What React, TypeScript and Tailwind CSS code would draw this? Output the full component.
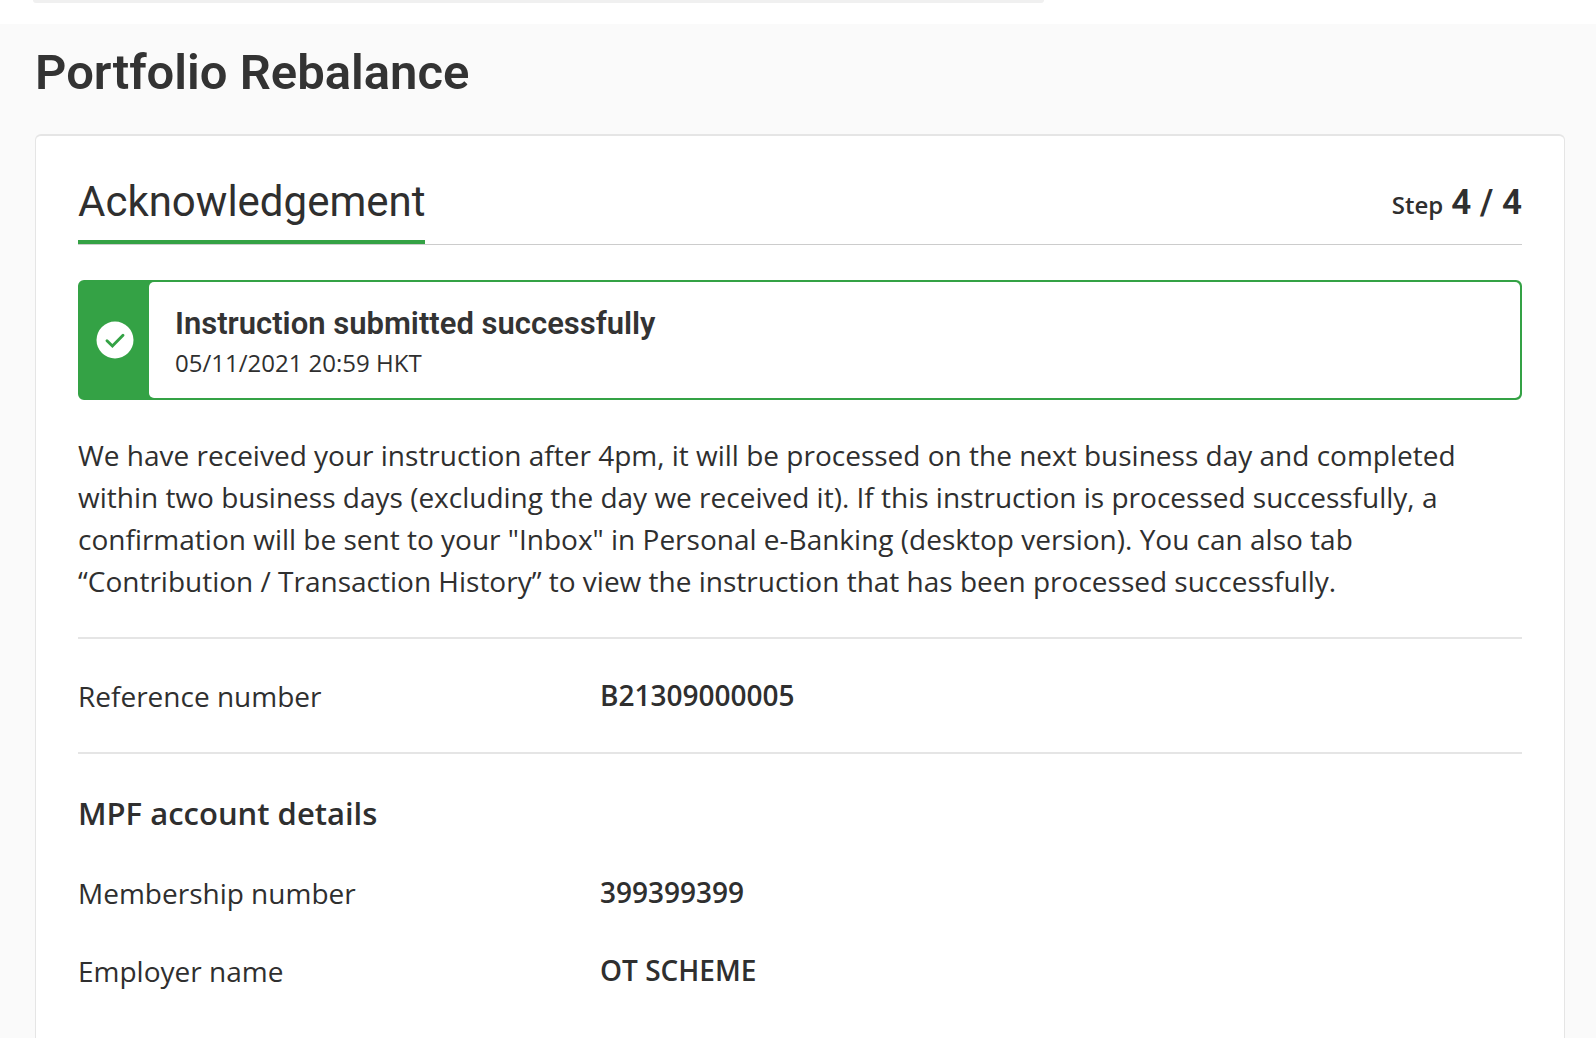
import React from "react";

const heading = "font-['Roboto',sans-serif]";

type DetailProps = { label: string; value: string };

function Detail({ label, value }: DetailProps) {
  return (
    <div className="grid grid-cols-[522px_1fr]">
      <dt className="pt-px leading-[38px]">{label}</dt>
      <dd className="leading-[38px] font-semibold">{value}</dd>
    </div>
  );
}

function CheckBadge() {
  return (
    <svg viewBox="0 0 38 38" className="size-[38px]" role="img" aria-label="Success">
      <circle cx="19" cy="19" r="18.5" fill="#fff" />
      <path
        d="M11 19.8l5.4 5.2L27 14.2"
        fill="none"
        stroke="#34a245"
        strokeWidth="2.9"
        strokeLinecap="round"
        strokeLinejoin="miter"
      />
    </svg>
  );
}

export default function App() {
  return (
    <div className="flex h-screen flex-col overflow-hidden bg-[#fafafa] font-['Open_Sans',sans-serif] text-[28px] text-[#2f2f2f]">
      <header className="h-6 shrink-0 bg-white pl-[33px]">
        <div className="h-[3px] w-[64.7%] rounded-b-md bg-[#f0f0f0]" />
      </header>

      <main className="flex grow flex-col pr-[31px] pl-[35px]">
        <h1 className={`${heading} pt-[19px] text-[49px] leading-[60px] font-semibold text-[#333333]`}>
          Portfolio Rebalance
        </h1>

        <section className="mt-[31px] grow rounded-t-md border border-t-2 border-b-0 border-[#e5e5e5] bg-white px-[42px]">
          <div className="flex items-stretch justify-between border-b border-[#cccccc] pt-10">
            <h2 className={`${heading} border-b-4 border-[#34a245] pb-3 text-[42px] leading-[52px]`}>
              Acknowledgement
            </h2>
            <p className="flex items-baseline gap-2 pt-px leading-[52px] font-semibold">
              <span className="text-[24px]">Step</span>
              <span className={`${heading} text-[35px]`}>4 / 4</span>
            </p>
          </div>

          <div role="status" className="mt-[35px] flex rounded-md border-2 border-[#34a245] bg-[#34a245]">
            <div className="flex w-[69px] shrink-0 items-center justify-center">
              <CheckBadge />
            </div>
            <div className="grow rounded-[5px] bg-white px-[26px] pt-[22px] pb-4">
              <h3 className={`${heading} text-[31px] leading-10 font-semibold text-[#333333]`}>
                Instruction submitted successfully
              </h3>
              <p className="text-[24px] leading-[38px]">05/11/2021 20:59 HKT</p>
            </div>
          </div>

          <p className="pt-[34px] pb-[35px] leading-[42px]">
            We have received your instruction after 4pm, it will be processed on the next business day and completed
            within two business days (excluding the day we received it). If this instruction is processed
            successfully, a confirmation will be sent to your "Inbox" in Personal e-Banking (desktop version). You can
            also tab “Contribution / Transaction History” to view the instruction that has been processed
            successfully.
          </p>

          <dl className="border-y-2 border-[#e5e5e5] py-[37px]">
            <Detail label="Reference number" value="B21309000005" />
          </dl>

          <h3 className="pt-[38px] text-[31px] leading-[42px] font-semibold">MPF account details</h3>
          <dl className="flex flex-col gap-[39px] pt-[39px]">
            <Detail label="Membership number" value="399399399" />
            <Detail label="Employer name" value="OT SCHEME" />
          </dl>
        </section>
      </main>
    </div>
  );
}
